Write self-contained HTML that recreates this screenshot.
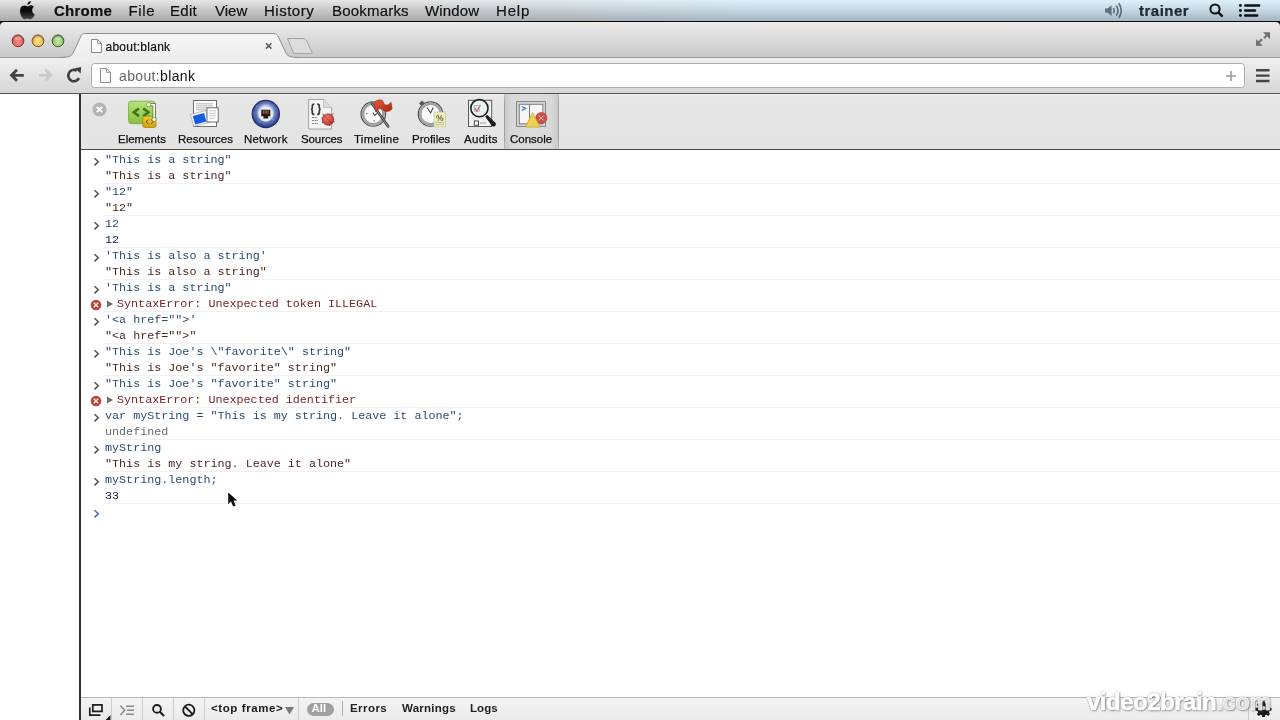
<!DOCTYPE html>
<html><head><meta charset="utf-8">
<style>
*{margin:0;padding:0;box-sizing:border-box}
html,body{width:1280px;height:720px;overflow:hidden;background:#fff;will-change:transform;font-family:"Liberation Sans",sans-serif}
.abs{position:absolute}
#menubar{left:0;top:0;width:1280px;height:22px;background:linear-gradient(to right,rgba(0,0,0,0) 0%,rgba(0,0,0,0) 100%),linear-gradient(#e6e6e6,#c9c9c9 45%,#a9a9a9);border-bottom:1px solid #0a0a0a}
#menublue{left:0;top:0;width:1280px;height:21px;background:linear-gradient(#ddf0fa,#c6d9e4 45%,#a4b4c2);-webkit-mask-image:linear-gradient(to right,transparent 0px,transparent 420px,#000 760px)}
.mi{position:absolute;top:2px;font-size:15px;color:#111;line-height:17px;white-space:nowrap;-webkit-text-stroke:0.2px #111}
#tabstrip{left:0;top:22px;width:1280px;height:36px;background:linear-gradient(#ebebeb,#c9c9c9);border-bottom:1px solid #999}
#toolbar{left:0;top:58px;width:1280px;height:36px;background:linear-gradient(#f0f0f0,#d6d6d6);border-bottom:1px solid #555}
#leftpane{left:0;top:94px;width:80px;height:626px;background:#fff}
#vline{left:79px;top:94px;width:2px;height:626px;background:#333}
#dtbar{left:81px;top:94px;width:1199px;height:56px;background:linear-gradient(#f0f0f0,#e6e6e6 3px,#e4e4e4);border-bottom:1px solid #4a4a4a}
.tl{position:absolute;top:38.5px;font-size:11.5px;color:#111;white-space:nowrap;-webkit-text-stroke:0.25px #111}
#console{left:81px;top:150px;width:1199px;height:547px;background:#fff}
.row{position:absolute;left:0;width:1199px;height:16px;font-family:"Liberation Mono",monospace;font-size:11.72px;line-height:16px;white-space:pre}
.sep{position:absolute;left:22px;width:1177px;height:1px;background:#f1f1f1}
.txt{position:absolute;left:24px;top:0}
.in{color:#2a4d74}
.outs{color:#4e2626}
.outn{color:#1a1a40}
.err{color:#782428}
.undef{color:#6a6a6a}
.chev{position:absolute;left:12px;top:5px}
.erricon{position:absolute;left:9px;top:3px}
.tri{position:absolute;left:25px;top:4px}
#status{left:81px;top:697px;width:1199px;height:23px;background:linear-gradient(#f3f3f3,#ebebeb);border-top:1px solid #b8b8b8}
.sb{position:absolute;top:3.5px;font-size:11.5px;font-weight:bold;color:#222;white-space:nowrap}
.wm{font-family:"Liberation Sans",sans-serif;font-weight:bold;font-size:24px;letter-spacing:-0.5px;color:#fff;white-space:nowrap;-webkit-text-stroke:0.6px #fff;text-shadow:0 0 2px rgba(80,80,80,.8),1px 1px 2px rgba(80,80,80,.6)}
</style></head><body>

<div id="menubar" class="abs">
<div id="menublue" class="abs"></div>
  <svg class="abs" style="left:0;top:0" width="40" height="21" viewBox="0 0 40 21"><defs><linearGradient id="gApple" x1="0" y1="0" x2="0" y2="1"><stop offset="0" stop-color="#080808"/><stop offset="0.45" stop-color="#0c0c0c"/><stop offset="1" stop-color="#4a4a4a"/></linearGradient></defs><g transform="translate(20 5.2)"><path d="M7.5 1.2C5.8 0.2 3.8-0.3 2.2 0.8 0.5 2-0.2 4.5 0.1 7 0.5 10 2 13 3.8 13.8 4.8 14.3 5.8 13.6 7.5 13.6 9.2 13.6 10.2 14.3 11.2 13.8 12.8 13 14 11 14.8 9.2 13 8.4 12.2 6.8 12.2 5 12.2 3.5 13 2.3 14 1.6 12.8 0.2 11-0.2 9.8 0.2 8.8 0.5 8.2 1 7.5 1.2Z" fill="url(#gApple)"/><path d="M7.3-0.4C7.3-2.4 8.8-4 10.9-4.2 10.9-2.2 9.3-0.6 7.3-0.4Z" fill="#0a0a0a"/></g></svg>
  <div class="mi" style="left:54px;font-weight:bold;letter-spacing:0.25px">Chrome</div>
  <div class="mi" style="left:128.5px;letter-spacing:0.6px">File</div>
  <div class="mi" style="left:170px;letter-spacing:0.3px">Edit</div>
  <div class="mi" style="left:215px">View</div>
  <div class="mi" style="left:264px;letter-spacing:0.5px">History</div>
  <div class="mi" style="left:332px;letter-spacing:0.2px">Bookmarks</div>
  <div class="mi" style="left:425px;letter-spacing:0.15px">Window</div>
  <div class="mi" style="left:496px;letter-spacing:0.8px">Help</div>
  <svg class="abs" style="left:1098px;top:0" width="30" height="21" viewBox="1098 0 30 21"><path d="M1105 8.6h2.6l4-3.3v10.6l-4-3.3H1105z" fill="#5f6e7c"/><path d="M1113.4 8c0.9 1.6 0.9 3.6 0 5.2" stroke="#5f6e7c" stroke-width="1.7" fill="none"/><path d="M1116.3 5.6c2 3 2 7 0 10" stroke="#5f6e7c" stroke-width="1.7" fill="none"/><path d="M1118.8 3.2c3.2 4.4 3.2 10.4 0 14.8" stroke="#5f6e7c" stroke-width="1.7" fill="none"/></svg>
  <div class="mi" style="left:1139px;font-weight:bold;color:#1c2a36;letter-spacing:0.5px">trainer</div>
  <svg class="abs" style="left:1209px;top:3px" width="15" height="15" viewBox="0 0 15 15"><circle cx="6" cy="6" r="4.6" stroke="#111" stroke-width="2" fill="none"/><path d="M9.3 9.3l4.3 4.3" stroke="#111" stroke-width="2.4"/></svg>
  <svg class="abs" style="left:1236px;top:0" width="28" height="21" viewBox="1236 0 28 21"><circle cx="1240.4" cy="5.5" r="1.45" fill="#111"/><circle cx="1240.4" cy="10.5" r="1.45" fill="#111"/><circle cx="1240.4" cy="15.5" r="1.45" fill="#111"/><path d="M1245.3 5.5h13.8M1245.3 10.5h9.6M1245.3 15.5h11.8" stroke="#111" stroke-width="2.6" stroke-linecap="round"/></svg>
</div>

<div id="tabstrip" class="abs"></div>
<div id="toolbar" class="abs"></div>
<svg class="abs" style="left:0;top:22px" width="1280" height="72" viewBox="0 22 1280 72">
<defs>
<linearGradient id="tg" x1="0" y1="0" x2="0" y2="1"><stop offset="0" stop-color="#f5f5f5"/><stop offset="1" stop-color="#ededed"/></linearGradient>
<radialGradient id="tlr" cx="0.5" cy="0.62" r="0.6"><stop offset="0" stop-color="#f89088"/><stop offset="0.6" stop-color="#e86a60"/><stop offset="1" stop-color="#a04038"/></radialGradient>
<radialGradient id="tly" cx="0.5" cy="0.62" r="0.6"><stop offset="0" stop-color="#ffe088"/><stop offset="0.6" stop-color="#f0c050"/><stop offset="1" stop-color="#9a7028"/></radialGradient>
<radialGradient id="tlg" cx="0.5" cy="0.62" r="0.6"><stop offset="0" stop-color="#c8e8a0"/><stop offset="0.6" stop-color="#a0c878"/><stop offset="1" stop-color="#4e7a34"/></radialGradient>
</defs>
<circle cx="18" cy="40.8" r="5.9" fill="url(#tlr)" stroke="#7a3830" stroke-width="1"/><ellipse cx="18" cy="38.3" rx="3.4" ry="2" fill="#fff" opacity="0.35"/>
<circle cx="38" cy="40.8" r="5.9" fill="url(#tly)" stroke="#7a5a20" stroke-width="1"/><ellipse cx="38" cy="38.3" rx="3.4" ry="2" fill="#fff" opacity="0.35"/>
<circle cx="58" cy="40.8" r="5.9" fill="url(#tlg)" stroke="#3e5e2c" stroke-width="1"/><ellipse cx="58" cy="38.3" rx="3.4" ry="2" fill="#fff" opacity="0.35"/>
<path d="M60 58.5V57.5C69 57.5 72 56 73.5 52L80.5 37C81.5 34.5 82.5 33.5 85 33.5H273.5C276 33.5 277 34.5 278.5 37L285.5 52C287 56 290 57.5 299 57.5V58.5z" fill="url(#tg)"/><path d="M60 57.5C69 57.5 72 56 73.5 52L80.5 37C81.5 34.5 82.5 33.5 85 33.5H273.5C276 33.5 277 34.5 278.5 37L285.5 52C287 56 290 57.5 299 57.5" fill="none" stroke="#8e8e8e" stroke-width="1"/>
<path d="M287.5 38.5H303C305 38.5 306 39.5 307 41.5L312 52.5C312.5 53.5 312 53.5 311 53.5H296C294.5 53.5 293.5 53 293 52z" fill="#dcdcdc" stroke="#9a9a9a" stroke-width="0.9"/>
<path d="M91.5 39.5h6.2l3.8 3.8v9.2h-10z M97.7 39.5v3.8h3.8" fill="#fafafa" stroke="#8a8a8a" stroke-width="1"/>
<path d="M266 43.2l5.4 5.4M271.4 43.2l-5.4 5.4" stroke="#5a5a5a" stroke-width="1.5"/>
<path d="M1263 32.2H1270V39.2z" fill="#6e6e6e"/><path d="M1264 38.2l3.2-3.2" stroke="#7a7a7a" stroke-width="2.4"/><path d="M1256 39.2V45.8H1262.8z" fill="#6e6e6e"/><path d="M1258.6 42.6l3.4-3.4" stroke="#7a7a7a" stroke-width="2.4"/>
<!-- toolbar -->
<path d="M11.8 75.3H23.8M17 69.8L11.5 75.3 17 80.8" stroke="#444" stroke-width="2.8" fill="none"/>
<path d="M51 75.3H39M45.3 69.8l5.5 5.5-5.5 5.5" stroke="#cacaca" stroke-width="2.8" fill="none"/>
<path d="M79 78.2A5.7 5.7 0 1 1 76.8 70.6" stroke="#3e3e3e" stroke-width="2.6" fill="none"/>
<path d="M74.8 68.2l6.4-1.2-0.6 6.6z" fill="#3e3e3e"/>
<rect x="91.5" y="63.5" width="1153" height="24" rx="3" fill="#fff" stroke="#adadad" stroke-width="1"/>
<path d="M100.5 68.5h6.2l3.8 3.8v10.2h-10z M106.7 68.5v3.8h3.8" fill="#fafafa" stroke="#8a8a8a" stroke-width="1"/>
<path d="M1231 71v10M1226 76h10" stroke="#9a9a9a" stroke-width="1.6"/>
<path d="M1256 70.2h13.5M1256 75.6h13.5M1256 81h13.5" stroke="#444" stroke-width="2.4"/>
</svg>
<div class="abs" style="left:105.5px;top:39.8px;font-size:12px;color:#111;white-space:nowrap;letter-spacing:0.25px;-webkit-text-stroke:0.2px #111">about:blank</div>
<div class="abs" style="left:119px;top:67.5px;font-size:14px;color:#666;white-space:nowrap;letter-spacing:0.35px">about:<span style="color:#111">blank</span></div>
<svg class="abs" style="left:0;top:22px" width="5" height="5" viewBox="0 0 5 5"><path d="M0 0H4.5Q0 0 0 4.5z" fill="#1a1a1a"/></svg><svg class="abs" style="left:1275px;top:22px" width="5" height="5" viewBox="0 0 5 5"><path d="M0.5 0H5V4.5Q5 0 0.5 0z" fill="#1a1a1a"/></svg>
<div id="leftpane" class="abs"></div>
<div id="vline" class="abs"></div>

<div id="dtbar" class="abs">

  <svg class="abs" style="left:11px;top:8px" width="15" height="15" viewBox="0 0 15 15"><circle cx="7.5" cy="7.5" r="7" fill="#b4b4b4"/><path d="M4.8 4.8l5.4 5.4M10.2 4.8l-5.4 5.4" stroke="#fff" stroke-width="1.8"/></svg>
  <div class="tl" style="left:37px">Elements</div>
  <div class="tl" style="left:97px">Resources</div>
  <div class="tl" style="left:163px;letter-spacing:0.2px">Network</div>
  <div class="tl" style="left:220px;letter-spacing:-0.1px">Sources</div>
  <div class="tl" style="left:273px;letter-spacing:0.25px">Timeline</div>
  <div class="tl" style="left:331px">Profiles</div>
  <div class="tl" style="left:383px;letter-spacing:0.3px">Audits</div>
  <div class="abs" style="left:423px;top:0;width:55px;height:55px;background:linear-gradient(to right,#c8c8c8,#d8d8d8 14%,#dcdcdc 50%,#d8d8d8 86%,#c8c8c8)"></div><div class="abs" style="left:423px;top:1px;width:1px;height:53px;background:linear-gradient(rgba(150,150,150,.3),#a0a0a0 20%,#a0a0a0 80%,rgba(150,150,150,.3))"></div><div class="abs" style="left:477px;top:1px;width:1px;height:53px;background:linear-gradient(rgba(150,150,150,.3),#a0a0a0 20%,#a0a0a0 80%,rgba(150,150,150,.3))"></div>
  <div class="tl" style="left:429px">Console</div>
<svg class="abs" style="left:0;top:0" width="500" height="55" viewBox="81 94 500 55">
<defs>
<linearGradient id="gEl" x1="0" y1="0" x2="0" y2="1"><stop offset="0" stop-color="#b8e27a"/><stop offset="1" stop-color="#86bf3e"/></linearGradient>
<radialGradient id="gNet" cx="0.5" cy="0.45" r="0.55"><stop offset="0.45" stop-color="#c8d0e8"/><stop offset="0.62" stop-color="#6a7ec4"/><stop offset="1" stop-color="#22347e"/></radialGradient>
<linearGradient id="gYel" x1="0" y1="0" x2="0" y2="1"><stop offset="0" stop-color="#f0c828"/><stop offset="1" stop-color="#d4a010"/></linearGradient>
<radialGradient id="gBug" cx="0.4" cy="0.35" r="0.7"><stop offset="0" stop-color="#f08070"/><stop offset="1" stop-color="#c02a20"/></radialGradient>
<linearGradient id="gFlag" x1="0" y1="0" x2="1" y2="1"><stop offset="0" stop-color="#e85a40"/><stop offset="1" stop-color="#b02410"/></linearGradient>
</defs>
<!-- Elements -->
<rect x="128.5" y="101.2" width="26.5" height="22.5" rx="3" fill="url(#gEl)" stroke="#78a83a" stroke-width="0.8"/>
<path d="M139 108.5l-5.2 3.8 5.2 3.8" stroke="#3f7418" stroke-width="2.6" fill="none"/>
<path d="M143.2 108.5l5.2 3.8-5.2 3.8" stroke="#3f7418" stroke-width="2.6" fill="none"/>
<rect x="142.8" y="116.2" width="13.2" height="11.3" rx="2" fill="url(#gYel)" stroke="#9a7a18" stroke-width="0.7"/>
<path d="M148.5 119.6l-2.6 2.1 2.6 2.1M151 119.6l2.6 2.1-2.6 2.1" stroke="#6a5008" stroke-width="1" fill="none"/>
<path d="M148.8 104.6h5.4v14.6" stroke="#4a6a2a" stroke-width="3.2" fill="none"/>
<path d="M148.8 104.6h5.4v14.6" stroke="#fff" stroke-width="1.8" fill="none"/>
<circle cx="148.6" cy="104.6" r="2" fill="#fff" stroke="#5a7a3a" stroke-width="0.6"/>
<circle cx="154.2" cy="119.4" r="2" fill="#fff" stroke="#5a7a3a" stroke-width="0.6"/>
<!-- Resources -->
<rect x="193.5" y="100.5" width="23" height="26" fill="#fbfbfb" stroke="#6e6e6e" stroke-width="1"/>
<path d="M196 103.8h17M196 105.8h17M196 107.8h14M196 109.8h11" stroke="#a8a8a8" stroke-width="0.8"/>
<path d="M190.5 114.5l15-4 3.2 12-15 4z" fill="#f4f8ff" stroke="#8a9ab0" stroke-width="0.6"/>
<path d="M192.8 116l11.2-3 2.4 8.6-11.2 3z" fill="#1a5ae0"/>
<rect x="207" y="107.8" width="11.2" height="14.2" fill="#fff" stroke="#5e5e5e" stroke-width="0.9"/>
<path d="M209 110.8h7M209 113.3h7M209 115.8h7M209 118.3h6" stroke="#b0b0b0" stroke-width="0.7"/>
<!-- Network -->
<circle cx="265.8" cy="114" r="13.6" fill="url(#gNet)" stroke="#22306a" stroke-width="1.2"/>
<circle cx="265.8" cy="114" r="7.4" fill="#e8eeee"/><path d="M256 106c3 3 6 4 10 4M274 120c-2-2-5-3-8-3M259 123c2-3 4-5 7-6" stroke="#a8b4dc" stroke-width="0.6" fill="none" opacity="0.7"/>
<path d="M261.3 109.8h9v6.4h-2.2v2.2h-4.6v-2.2h-2.2z" fill="#2a1810"/>
<path d="M263.4 110.3v3.5M265 110.3v3.5M266.6 110.3v3.5M268.2 110.3v3.5" stroke="#d89a9a" stroke-width="0.6"/>
<!-- Sources -->
<path d="M308.6 99.5h15l8 8v21.5h-23z" fill="#f4f4f4" stroke="#9a9a9a" stroke-width="0.9"/>
<path d="M323.6 99.5v8h8" fill="#dcdcdc" stroke="#aaa" stroke-width="0.6"/>
<path d="M314.4 104.2c-1.6 0-2.1 0.6-2.1 2v1.8c0 1-0.5 1.3-1.4 1.3 0.9 0 1.4 0.3 1.4 1.3v1.8c0 1.4 0.5 2 2.1 2M317.2 104.2c1.6 0 2.1 0.6 2.1 2v1.8c0 1 0.5 1.3 1.4 1.3-0.9 0-1.4 0.3-1.4 1.3v1.8c0 1.4-0.5 2-2.1 2" stroke="#3a3a3a" stroke-width="1.7" fill="none"/>
<path d="M312 117.5h5M312 120.5h6M312 123.5h6" stroke="#777" stroke-width="0.9" stroke-dasharray="2 0.6"/>
<path d="M322.5 114l2.5 2M321.5 118l3 0.5M322 122.5l2.8-1.2M333 113.5l-2 2M334.5 122l-2.5-1M330 126l-1-2" stroke="#222" stroke-width="0.9"/>
<circle cx="328" cy="119.5" r="5.8" fill="url(#gBug)" stroke="#7a1a14" stroke-width="0.5"/>
<path d="M324 115.5l8 8" stroke="#8a2018" stroke-width="0.7"/>
<!-- Timeline -->
<circle cx="373.3" cy="114" r="12.2" fill="#fdfdfd" stroke="#505050" stroke-width="1.3"/>
<circle cx="373.3" cy="114" r="10.7" fill="none" stroke="#a4a4a4" stroke-width="1.8"/>
<circle cx="373.3" cy="114" r="9.5" fill="none" stroke="#707070" stroke-width="0.7"/>
<path d="M372.8 112.5l1.8 3 2.8-2.2" stroke="#555" stroke-width="1.1" fill="none"/>
<circle cx="366.8" cy="113.6" r="0.8" fill="#777"/><circle cx="374" cy="121" r="0.8" fill="#777"/>
<path d="M372 103.5l16.2 23" stroke="#3a3a3a" stroke-width="2.6" stroke-linecap="round"/><path d="M372 103.5l16.2 23" stroke="#9a9a9a" stroke-width="1" stroke-linecap="round"/>
<path d="M374 102.6c2.5-2.8 5.8-3.4 8.6-2.2 1 2.6 1.5 4.8 4.2 4.6 1.6-0.1 3-1.2 4.2-2.8l1.2 6.4c-1.6 2.2-4 3.4-6.6 2.8-2.4-0.5-3.2-2.6-5.2-2.6-2.2 0-3.8 1.4-4.8 3z" fill="url(#gFlag)" stroke="#8a2410" stroke-width="0.5"/>
<!-- Profiles -->
<path d="M419 103.5l3-3 3.2 3.2-3 3z" fill="#555"/>
<circle cx="430.5" cy="114" r="12.2" fill="#fbfbfb" stroke="#505050" stroke-width="1.3"/>
<circle cx="430.5" cy="114" r="10.7" fill="none" stroke="#a4a4a4" stroke-width="1.8"/>
<circle cx="430.5" cy="114" r="9.5" fill="none" stroke="#707070" stroke-width="0.7"/>
<path d="M427 107.5l3.6 5.5 2.6-5.5" stroke="#444" stroke-width="1.1" fill="none"/>
<rect x="434" y="112" width="11.5" height="14.8" fill="#eef0c0" stroke="#c0c090" stroke-width="0.7"/>
<text x="436" y="120.5" font-family="Liberation Sans" font-size="8.5" font-weight="bold" fill="#6a6a3a">%</text>
<path d="M435.5 122.5h8.5M435.5 124.5h8.5" stroke="#a8a878" stroke-width="0.7"/>
<!-- Audits -->
<rect x="468.5" y="100.3" width="23.2" height="26.2" fill="#f0f0f0" stroke="#5a5a5a" stroke-width="1"/>
<rect x="474.3" y="121" width="4.2" height="4.2" fill="#fff" stroke="#333" stroke-width="0.9"/>
<path d="M480 123h6" stroke="#999" stroke-width="1"/>
<circle cx="479.4" cy="108.2" r="8.6" fill="#e8f2ee" stroke="#1e1e1e" stroke-width="1.6"/>
<path d="M474.8 108l2 3.2 3.6-6" stroke="#c86a8a" stroke-width="1.3" fill="none"/>
<rect x="474.5" y="105.5" width="5" height="6" fill="none" stroke="#9aa" stroke-width="0.6"/>
<path d="M485.2 116.8l2-2 8 7.6c0.9 0.9 0.9 2.4 0 3.3-0.9 0.9-2.4 0.9-3.3 0z" fill="#161616"/><path d="M488.5 117.5l5.5 5.2" stroke="#5a5a5a" stroke-width="0.6"/>
<!-- Console -->
<rect x="516.5" y="101.5" width="29" height="25" fill="#d2d2d2" stroke="#8a8a8a" stroke-width="1"/>
<rect x="519.3" y="104.3" width="23.5" height="19.5" fill="#f6f6f6" stroke="#7a7a7a" stroke-width="0.9"/>
<path d="M529.5 104.3v19.5" stroke="#6a6a6a" stroke-width="0.9"/>
<path d="M521.8 106.5l3.8 1.9-3.8 1.9" stroke="#3a88d8" stroke-width="1.3" fill="none"/>
<circle cx="541.3" cy="118" r="5.6" fill="#d24a44" stroke="#9a2a2a" stroke-width="0.5"/>
<path d="M538.8 115.5l5 5M543.8 115.5l-5 5" stroke="#ffd0d0" stroke-width="1"/>
<path d="M532.6 112.5l7.4 14.6h-14.8z" fill="#efd050" stroke="#b89a2a" stroke-width="0.6"/>
</svg>


</div>

<div id="console" class="abs">
  <div class="row" style="top:2px"><svg class="chev" width="8" height="10" viewBox="0 0 8 10"><path d="M1.5 1.2l3.8 3.6-3.8 3.6" stroke="#505050" stroke-width="1.5" fill="none"/></svg><span class="txt in">&quot;This is a string&quot;</span></div>
<div class="row" style="top:18px"><span class="txt outs">&quot;This is a string&quot;</span></div>
<div class="sep" style="top:33px"></div>
<div class="row" style="top:34px"><svg class="chev" width="8" height="10" viewBox="0 0 8 10"><path d="M1.5 1.2l3.8 3.6-3.8 3.6" stroke="#505050" stroke-width="1.5" fill="none"/></svg><span class="txt in">&quot;12&quot;</span></div>
<div class="row" style="top:50px"><span class="txt outs">&quot;12&quot;</span></div>
<div class="sep" style="top:65px"></div>
<div class="row" style="top:66px"><svg class="chev" width="8" height="10" viewBox="0 0 8 10"><path d="M1.5 1.2l3.8 3.6-3.8 3.6" stroke="#505050" stroke-width="1.5" fill="none"/></svg><span class="txt in">12</span></div>
<div class="row" style="top:82px"><span class="txt outn">12</span></div>
<div class="sep" style="top:97px"></div>
<div class="row" style="top:98px"><svg class="chev" width="8" height="10" viewBox="0 0 8 10"><path d="M1.5 1.2l3.8 3.6-3.8 3.6" stroke="#505050" stroke-width="1.5" fill="none"/></svg><span class="txt in">&#x27;This is also a string&#x27;</span></div>
<div class="row" style="top:114px"><span class="txt outs">&quot;This is also a string&quot;</span></div>
<div class="sep" style="top:129px"></div>
<div class="row" style="top:130px"><svg class="chev" width="8" height="10" viewBox="0 0 8 10"><path d="M1.5 1.2l3.8 3.6-3.8 3.6" stroke="#505050" stroke-width="1.5" fill="none"/></svg><span class="txt in">&#x27;This is a string&quot;</span></div>
<div class="row" style="top:146px"><svg class="erricon" width="12" height="12" viewBox="0 0 12 12"><circle cx="6" cy="6" r="5.3" fill="#bc4238"/><path d="M3.8 3.8l4.4 4.4M8.2 3.8l-4.4 4.4" stroke="#fff" stroke-width="1.4"/></svg><svg class="tri" width="8" height="8" viewBox="0 0 8 8"><path d="M1 0.5l6 3.5-6 3.5z" fill="#6e6e6e"/></svg><span class="txt err" style="left:36px">SyntaxError: Unexpected token ILLEGAL</span></div>
<div class="sep" style="top:161px"></div>
<div class="row" style="top:162px"><svg class="chev" width="8" height="10" viewBox="0 0 8 10"><path d="M1.5 1.2l3.8 3.6-3.8 3.6" stroke="#505050" stroke-width="1.5" fill="none"/></svg><span class="txt in">&#x27;&lt;a href=&quot;&quot;&gt;&#x27;</span></div>
<div class="row" style="top:178px"><span class="txt outs">&quot;&lt;a href=&quot;&quot;&gt;&quot;</span></div>
<div class="sep" style="top:193px"></div>
<div class="row" style="top:194px"><svg class="chev" width="8" height="10" viewBox="0 0 8 10"><path d="M1.5 1.2l3.8 3.6-3.8 3.6" stroke="#505050" stroke-width="1.5" fill="none"/></svg><span class="txt in">&quot;This is Joe&#x27;s \&quot;favorite\&quot; string&quot;</span></div>
<div class="row" style="top:210px"><span class="txt outs">&quot;This is Joe&#x27;s &quot;favorite&quot; string&quot;</span></div>
<div class="sep" style="top:225px"></div>
<div class="row" style="top:226px"><svg class="chev" width="8" height="10" viewBox="0 0 8 10"><path d="M1.5 1.2l3.8 3.6-3.8 3.6" stroke="#505050" stroke-width="1.5" fill="none"/></svg><span class="txt in">&quot;This is Joe&#x27;s &quot;favorite&quot; string&quot;</span></div>
<div class="row" style="top:242px"><svg class="erricon" width="12" height="12" viewBox="0 0 12 12"><circle cx="6" cy="6" r="5.3" fill="#bc4238"/><path d="M3.8 3.8l4.4 4.4M8.2 3.8l-4.4 4.4" stroke="#fff" stroke-width="1.4"/></svg><svg class="tri" width="8" height="8" viewBox="0 0 8 8"><path d="M1 0.5l6 3.5-6 3.5z" fill="#6e6e6e"/></svg><span class="txt err" style="left:36px">SyntaxError: Unexpected identifier</span></div>
<div class="sep" style="top:257px"></div>
<div class="row" style="top:258px"><svg class="chev" width="8" height="10" viewBox="0 0 8 10"><path d="M1.5 1.2l3.8 3.6-3.8 3.6" stroke="#505050" stroke-width="1.5" fill="none"/></svg><span class="txt in">var myString = &quot;This is my string. Leave it alone&quot;;</span></div>
<div class="row" style="top:274px"><span class="txt undef">undefined</span></div>
<div class="sep" style="top:289px"></div>
<div class="row" style="top:290px"><svg class="chev" width="8" height="10" viewBox="0 0 8 10"><path d="M1.5 1.2l3.8 3.6-3.8 3.6" stroke="#505050" stroke-width="1.5" fill="none"/></svg><span class="txt in">myString</span></div>
<div class="row" style="top:306px"><span class="txt outs">&quot;This is my string. Leave it alone&quot;</span></div>
<div class="sep" style="top:321px"></div>
<div class="row" style="top:322px"><svg class="chev" width="8" height="10" viewBox="0 0 8 10"><path d="M1.5 1.2l3.8 3.6-3.8 3.6" stroke="#505050" stroke-width="1.5" fill="none"/></svg><span class="txt in">myString.length;</span></div>
<div class="row" style="top:338px"><span class="txt outn">33</span></div>
<div class="sep" style="top:353px"></div>
<div class="row" style="top:354px"><svg class="chev" width="8" height="10" viewBox="0 0 8 10"><path d="M1.5 1.2l3.8 3.6-3.8 3.6" stroke="#4a6c94" stroke-width="1.5" fill="none"/></svg></div>
</div>

<div id="status" class="abs">
  <svg class="abs" style="left:0;top:0" width="240" height="23" viewBox="81 697 240 23">
    <path d="M92.8 703.8h9.2v6.6h-9.2z" stroke="#1e1e1e" stroke-width="1.7" fill="none"/>
    <path d="M89.8 706.5v7.6h10.6" stroke="#1e1e1e" stroke-width="1.7" fill="none"/>
    <path d="M110.5 714v6h-6z" fill="#1e1e1e"/>
    <path d="M120.3 704.5l4.4 4.7-4.4 4.7" stroke="#8a8a8a" stroke-width="1.5" fill="none"/>
    <path d="M126 705.2h8M127 709.2h7M126 713.2h8" stroke="#8a8a8a" stroke-width="1.5"/>
    <circle cx="157" cy="707.9" r="3.9" stroke="#1e1e1e" stroke-width="1.9" fill="none"/>
    <path d="M159.8 710.8l4.3 4.2" stroke="#1e1e1e" stroke-width="2.2"/>
    <circle cx="188.8" cy="709.3" r="5.6" stroke="#1e1e1e" stroke-width="1.8" fill="none"/>
    <path d="M185 705.5l7.6 7.6" stroke="#1e1e1e" stroke-width="1.8"/>
    <path d="M285 706h9l-4.5 7.5z" fill="#7a7a7a"/>
  </svg>
  <div class="abs" style="left:30px;top:0;width:1px;height:23px;background:#cdcdcd"></div>
  <div class="abs" style="left:61px;top:0;width:1px;height:23px;background:#cdcdcd"></div>
  <div class="abs" style="left:92px;top:0;width:1px;height:23px;background:#cdcdcd"></div>
  <div class="abs" style="left:123px;top:0;width:1px;height:23px;background:#cdcdcd"></div>
  <div class="abs" style="left:217px;top:0;width:1px;height:23px;background:#cdcdcd"></div>
  <div class="sb" style="left:130px;font-size:11.5px;letter-spacing:0.6px;color:#1a1a1a">&lt;top frame&gt;</div>
  <div class="abs" style="left:226px;top:4.6px;width:27px;height:13.5px;border-radius:7px;background:#a0a0a0"></div>
  <div class="sb" style="left:230.5px;color:#fff">All</div>
  <div class="abs" style="left:261px;top:3px;width:1px;height:15px;background:#b0b0b0"></div>
  <div class="sb" style="left:269px;letter-spacing:0.45px">Errors</div>
  <div class="sb" style="left:321px;letter-spacing:0.25px">Warnings</div>
  <div class="sb" style="left:389px;letter-spacing:0.1px">Logs</div>
</div>
<div class="abs" style="left:1248px;top:698px;width:1px;height:22px;background:#cdcdcd"></div>
<svg class="abs" style="left:1254px;top:698px" width="19" height="19" viewBox="0 0 19 19"><g transform="translate(9.5 9.9) scale(0.9)"><path d="M-1.4-7.3h2.8l0.4 2.2 1.6 0.7 1.9-1.3 2 2-1.3 1.9 0.7 1.6 2.2 0.4v2.8l-2.2 0.4-0.7 1.6 1.3 1.9-2 2-1.9-1.3-1.6 0.7-0.4 2.2h-2.8l-0.4-2.2-1.6-0.7-1.9 1.3-2-2 1.3-1.9-0.7-1.6-2.2-0.4v-2.8l2.2-0.4 0.7-1.6-1.3-1.9 2-2 1.9 1.3 1.6-0.7z" fill="#1a1a1a"/><circle r="2.2" fill="#ddd"/></g></svg>
<div class="abs wm" style="left:1087px;top:688px">video2brain<span style="color:rgba(255,255,255,.8)">.com</span></div>
<svg class="abs" style="left:220px;top:488px" width="24" height="24" viewBox="220 488 24 24"><path d="M228.2 492.6V504.2L231 501.4 233.2 506.6 235.6 505.6 233.5 500.6H237.2Z" fill="#0a0a0a" stroke="#fff" stroke-width="1.6" stroke-linejoin="round" paint-order="stroke"/></svg>

</body></html>
